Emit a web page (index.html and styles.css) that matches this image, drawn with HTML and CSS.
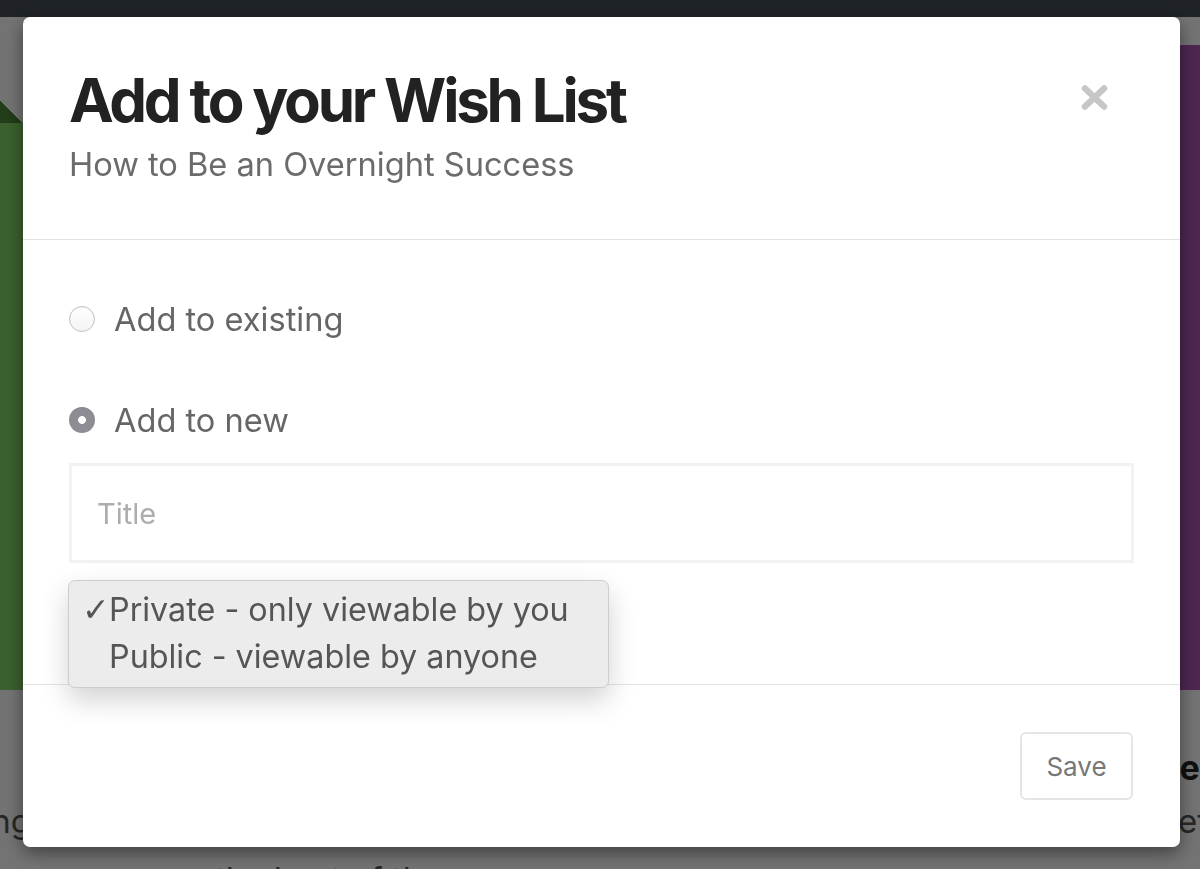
FILE: index.html
```html
<!DOCTYPE html>
<html lang="en">
<head>
    <meta charset="UTF-8">
    <meta name="viewport" content="width=device-width, initial-scale=1.0">
    <title>Add to your Wish List</title>
    <link rel="stylesheet" href="styles.css">
</head>
<body>
    <div class="page">
        <header class="topbar"></header>

        <main class="shelf">
            <article class="book book-left">
                <div class="cover cover-green"></div>
                <h3 class="book-title">Becoming</h3>
                <p class="book-desc">A story worth reading</p>
            </article>
            <article class="book book-mid">
                <div class="cover cover-blank"></div>
                <h3 class="book-title">&nbsp;</h3>
                <p class="book-desc">&nbsp;</p>
                <p class="book-desc book-desc-mid">the best of the year</p>
            </article>
            <article class="book book-right">
                <div class="cover cover-purple"></div>
                <h3 class="book-title">Here</h3>
                <p class="book-desc">etc</p>
            </article>
        </main>
    </div>

    <div class="backdrop">
        <div class="modal">
            <div class="modal-header">
                <div class="modal-heading">
                    <h2 class="modal-title">Add to your Wish List</h2>
                    <p class="modal-subtitle">How to Be an Overnight Success</p>
                </div>
                <button class="close-btn" aria-label="Close">
                    <svg width="27" height="25" viewBox="0 0 27 25">
                        <path d="M4 3.5 L23 21.5 M23 3.5 L4 21.5" stroke="#c6c6c6" stroke-width="6.5" stroke-linecap="round"/>
                    </svg>
                </button>
            </div>

            <div class="modal-body">
                <label class="radio-row">
                    <span class="radio"></span>
                    <span class="radio-label">Add to existing</span>
                </label>
                <label class="radio-row radio-row-new">
                    <span class="radio radio-checked"></span>
                    <span class="radio-label">Add to new</span>
                </label>

                <input class="title-input" type="text" placeholder="Title">

                <div class="select-slot">
                    <ul class="select-menu">
                        <li><span class="check">✓</span>Private - only viewable by you</li>
                        <li><span class="check"></span>Public - viewable by anyone</li>
                    </ul>
                </div>
            </div>

            <div class="modal-footer">
                <button class="save-btn">Save</button>
            </div>
        </div>
    </div>
</body>
</html>
```

FILE: styles.css
```css
body {
    font-family: Inter, "Liberation Sans", sans-serif;
    margin: 0;
    padding: 0;
    overflow: hidden;
    background-color: #fff;
}

.page {
    height: 869px;
    overflow: hidden;
}

.topbar {
    height: 17px;
    background-color: #454e57;
}

.shelf {
    display: grid;
    grid-template-columns: 400px 1fr 420px;
    column-gap: 40px;
    margin: 0 -384px 0 -377px;
    padding-top: 28px;
}

.cover {
    height: 645px;
}

.cover-green {
    height: 590px;
    margin-top: 55px;
    background:
        linear-gradient(to top right, #4c873a 50%, transparent 50%) right top / 23px 23px no-repeat,
        linear-gradient(transparent 0 23px, #83d568 23px);
}

.cover-purple {
    background-color: #ad55b2;
}

.book-title {
    margin: 58px 0 0;
    font-size: 34px;
    line-height: 40px;
    color: #222;
}

.book-left .book-title {
    visibility: hidden;
}

.book-left .book-desc {
    text-align: right;
    margin-right: -8px;
}

.book-right .book-title {
    margin-left: -10px;
}

.book-right .book-desc {
    margin-left: 14px;
}

.book-desc {
    margin: 13px 0 0;
    font-size: 33px;
    line-height: 40px;
    color: #555;
}

.book-desc-mid {
    margin: 0;
    padding-left: 152px;
    line-height: 76px;
}

.backdrop {
    position: fixed;
    inset: 0;
    background-color: rgba(0, 0, 0, 0.55);
    padding-top: 17px;
}

.modal {
    width: 1157px;
    margin-left: 23px;
    background-color: #fff;
    border-radius: 7px;
    box-shadow: 0 6px 18px rgba(0, 0, 0, 0.45);
}

.modal-header {
    display: flex;
    justify-content: space-between;
    align-items: flex-start;
    height: 223px;
    box-sizing: border-box;
    padding: 0 46px;
    border-bottom: 1px solid #e3e3e3;
}

.modal-title {
    margin: 50px 0 0;
    font-size: 60px;
    font-weight: 700;
    line-height: 66px;
    letter-spacing: -3.2px;
    color: #222;
}

.modal-subtitle {
    margin: 9px 0 0;
    font-size: 32.6px;
    line-height: 44px;
    color: #6b6b6b;
}

.close-btn {
    margin: 68px 26px 0 0;
    padding: 0;
    border: 0;
    background: none;
    line-height: 0;
}

.modal-body {
    padding: 59px 46px 44px;
}

.radio-row {
    display: flex;
    align-items: center;
    gap: 19px;
    height: 40px;
}

.radio-row-new {
    margin-top: 61px;
}

.radio {
    width: 26px;
    height: 26px;
    box-sizing: border-box;
    border-radius: 50%;
    border: 1px solid #c2c2c2;
    background: linear-gradient(#fff, #f4f4f4);
    box-shadow: inset 0 1px 1px rgba(0, 0, 0, 0.06);
}

.radio-checked {
    border: 0;
    background: radial-gradient(circle, #fff 0 3.6px, #8e8d93 4.2px);
}

.radio-label {
    font-size: 32.6px;
    color: #666;
}

.title-input {
    display: block;
    width: 100%;
    height: 100px;
    box-sizing: border-box;
    margin-top: 23px;
    padding: 0 25px;
    border: 3px solid #f2f2f2;
    border-radius: 0;
    outline: none;
    font-family: Inter, "Liberation Sans", sans-serif;
    font-size: 29px;
    color: #444;
}

.title-input::placeholder {
    color: #adadad;
}

.select-slot {
    position: relative;
    height: 60px;
    margin-top: 17px;
}

.select-menu {
    position: absolute;
    top: 0;
    left: -1px;
    z-index: 2;
    width: 541px;
    box-sizing: border-box;
    margin: 0;
    padding: 5px 0 7px;
    list-style: none;
    background-color: #ececec;
    border: 1px solid #cdcdcd;
    border-radius: 7px;
    box-shadow: 0 12px 28px rgba(0, 0, 0, 0.18);
}

.select-menu li {
    display: flex;
    font-size: 32.3px;
    line-height: 47px;
    color: #555;
}

.check {
    width: 27px;
    padding-left: 13px;
    font-family: "DejaVu Sans", sans-serif;
    font-size: 33px;
    font-weight: 300;
}

.modal-footer {
    display: flex;
    justify-content: flex-end;
    padding: 47px 47px;
    border-top: 1px solid #e3e3e3;
}

.save-btn {
    width: 113px;
    height: 68px;
    border: 2px solid #e5e5e5;
    border-radius: 6px;
    background-color: #fff;
    font-family: Inter, "Liberation Sans", sans-serif;
    font-size: 26px;
    color: #777;
}
```
